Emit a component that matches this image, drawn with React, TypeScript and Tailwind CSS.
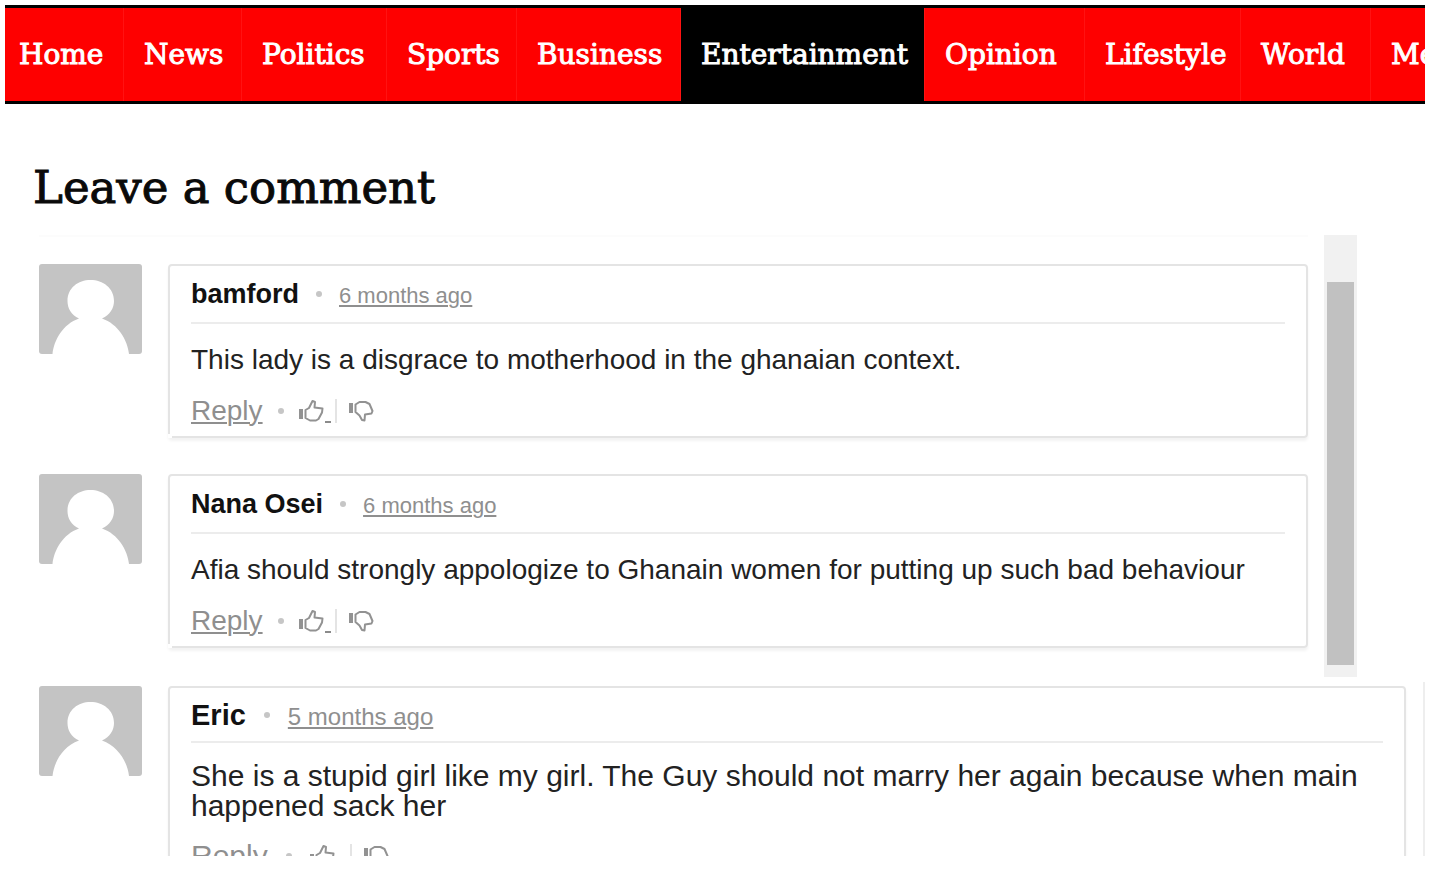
const NAV = [
  { label: "Home", cell: "w-[119px] pl-[14px]" },
  { label: "News", cell: "w-[118px] pl-5" },
  { label: "Politics", cell: "w-[145px] pl-5" },
  { label: "Sports", cell: "w-[130px] pl-5" },
  { label: "Business", cell: "w-[164px] pl-5" },
  { label: "Entertainment", cell: "w-[244px] bg-black pl-5" },
  { label: "Opinion", cell: "w-[160px] pl-5" },
  { label: "Lifestyle", cell: "w-[156px] pl-5" },
  { label: "World", cell: "w-[130px] pl-5" },
  { label: "Media", cell: "w-[130px] pl-5" },
];

function Avatar() {
  return (
    <svg viewBox="0 0 103 90" className="h-[90px] w-[103px] shrink-0" role="img" aria-label="User avatar">
      <rect width="103" height="90" rx="3" fill="#c4c4c4" />
      <path
        d="M13.500 90C15 76 24 60 40 54.500C32 51 28.500 44 28.500 37C28.500 24 39 16 51.500 16C64 16 75 24 75 37C75 44 71 51 63 54.500C79 60 88.500 76 90 90Z"
        fill="#fff"
      />
    </svg>
  );
}

function ThumbUp() {
  return (
    <svg viewBox="0 0 26 24" className="h-6 w-[26px]" fill="none" stroke="#929292" strokeWidth="2" strokeLinejoin="round">
      <path d="M2 10V20" strokeWidth="4" />
      <path d="M6.500 11L10 9L13.500 2L16 3L15.500 8.500L23.500 9.500L23 13.500L19.500 20L17 21.500H11L6.500 19Z" />
    </svg>
  );
}

function ThumbDown() {
  return (
    <svg viewBox="0 0 26 24" className="h-6 w-[26px]" fill="none" stroke="#929292" strokeWidth="2" strokeLinejoin="round">
      <path d="M2 4V14" strokeWidth="4" />
      <path d="M6.500 5.500L10.500 3H16.500L20.500 5L23.500 12L22.500 14.500L16 15.500L15.500 21.500L13 21L10.500 16.500L6.500 13Z" />
    </svg>
  );
}

function Dot() {
  return <span className="size-[6px] shrink-0 rounded-full bg-[#c6c6c6]" />;
}

type CommentProps = { name: string; age: string; text: string; wide?: boolean };

function Comment({ name, age, text, wide = false }: CommentProps) {
  return (
    <li className="flex items-start gap-[26px]">
      <Avatar />
      <article
        className={`relative min-w-0 grow rounded border-2 border-[#e4e4e4] px-[21px] shadow-[0_3px_3px_rgba(0,0,0,0.05)] ${wide ? "" : "h-[174px]"}`}
      >
        <header className={`flex items-center border-b-2 border-[#ececec] ${wide ? "h-[55px] gap-[18px]" : "h-[58px] gap-[17px]"}`}>
          <h2 className={`leading-8 font-bold text-[#111] ${wide ? "text-[29px]" : "text-[27px]"}`}>{name}</h2>
          <Dot />
          <a
            href="#comment"
            className={`pt-1 leading-8 text-[#8f8f8f] underline decoration-2 underline-offset-2 ${wide ? "text-[24px]" : "text-[22px]"}`}
          >
            {age}
          </a>
        </header>
        <p className={`text-[#222] ${wide ? "pt-[18px] text-[30px] leading-[30px]" : "pt-5 text-[28px] leading-8"}`}>{text}</p>
        <footer className="mt-[19px] flex h-8 items-center">
          <a
            href="#reply"
            className={`leading-8 text-[#8f8f8f] underline decoration-2 underline-offset-2 ${wide ? "text-[30px]" : "text-[28px]"}`}
          >
            Reply
          </a>
          <span className={`flex justify-center ${wide ? "w-[42px]" : "w-[36px]"}`}>
            <Dot />
          </span>
          <button aria-label="Like" className="flex items-end">
            <ThumbUp />
            <span className="h-[2px] w-[6px] bg-[#8b8b8b]" />
          </button>
          <span className={`h-6 w-[2px] bg-[#e4e4e4] ${wide ? "ml-2" : "ml-1"}`} />
          <button aria-label="Dislike" className="ml-3">
            <ThumbDown />
          </button>
        </footer>
        {!wide && <span className="absolute -bottom-[2px] -left-[2px] size-1 bg-white" />}
      </article>
    </li>
  );
}

export default function App() {
  return (
    <div className="min-h-screen overflow-hidden bg-white p-[5px] font-['Liberation_Sans',Arial,sans-serif]">
      <nav className="overflow-hidden border-y-[3px] border-black bg-[#fe0000] font-['DejaVu_Serif',serif]">
        <ul className="flex h-[93px]">
          {NAV.map((item) => (
            <li key={item.label} className={`shrink-0 border-r border-[#ff1212] ${item.cell}`}>
              <a href="#section" className="flex h-full items-center text-[28px] text-white [-webkit-text-stroke:1px]">
                {item.label}
              </a>
            </li>
          ))}
        </ul>
      </nav>
      <main>
        <h1 className="pt-[54px] pl-7 font-['DejaVu_Serif',serif] text-[45px] leading-[60px] text-[#0a0a0a] [-webkit-text-stroke:1px]">
          Leave a comment
        </h1>
        <section className="mt-[17px] flex h-[442px] gap-4 pr-[68px] pl-[34px]">
          <ul className="flex grow flex-col gap-9 border-t-2 border-[#fcfcfc] pt-[27px]">
            <Comment name="bamford" age="6 months ago" text="This lady is a disgrace to motherhood in the ghanaian context." />
            <Comment
              name="Nana Osei"
              age="6 months ago"
              text="Afia should strongly appologize to Ghanain women for putting up such bad behaviour"
            />
          </ul>
          <div className="w-[33px] shrink-0 bg-[#f1f1f1] px-[3px] pt-[47px] pb-3">
            <div className="h-full bg-[#c1c1c1]" />
          </div>
        </section>
        <section className="mt-[5px] ml-[34px] h-[174px] overflow-hidden border-r-2 border-[#eee] pt-1 pr-[17px]">
          <ul>
            <Comment
              wide
              name="Eric"
              age="5 months ago"
              text="She is a stupid girl like my girl. The Guy should not marry her again because when main happened sack her"
            />
          </ul>
        </section>
      </main>
    </div>
  );
}
